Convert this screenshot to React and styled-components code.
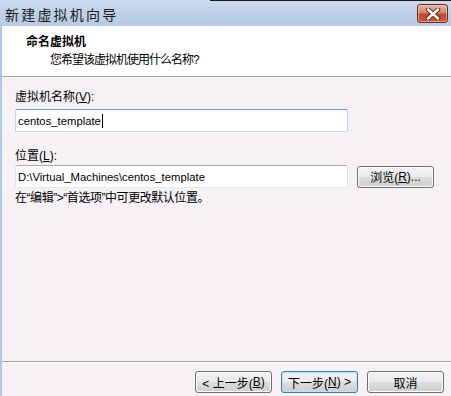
import React from 'react';
import styled, { createGlobalStyle } from 'styled-components';

const GlobalStyle = createGlobalStyle`
  html, body {
    margin: 0;
    padding: 0;
    background: #f5f1f5;
  }
  body {
    font-family: "Liberation Sans", "Noto Sans CJK SC", sans-serif;
    font-size: 12px;
    color: #000;
  }
`;

const Window = styled.div`
  width: 451px;
  height: 396px;
  display: flex;
  flex-direction: column;
  overflow: hidden;
`;

const TitleBar = styled.div`
  height: 26px;
  flex: none;
  display: flex;
  align-items: center;
  justify-content: space-between;
  padding: 0 3px 0 5px;
  background:
    linear-gradient(to right, transparent 210px, #1a1a1a 210px) top / 100% 1px no-repeat,
    linear-gradient(to bottom, #cbdaee 0%, #bfd1e8 50%, #b6cae3 100%);
`;

const TitleText = styled.div`
  font-family: "Noto Sans CJK SC", sans-serif;
  font-size: 14px;
  letter-spacing: 2.2px;
  color: #1b1b1b;
  padding-top: 1px;
`;

const CloseButton = styled.div`
  width: 29px;
  height: 17px;
  margin-top: 1px;
  border: 1px solid #6e2b22;
  border-radius: 3px;
  display: flex;
  align-items: center;
  justify-content: center;
  background: linear-gradient(to bottom, #eab0a2 0%, #da8270 45%, #c2452d 55%, #cc5c42 100%);
  box-shadow: inset 0 0 0 1px rgba(255, 220, 210, 0.5);
`;

const Content = styled.div`
  flex: 1;
  display: flex;
  flex-direction: column;
  border-left: 2px solid #abc9ee;
`;

const Header = styled.div`
  background: #fff;
  height: 51px;
  flex: none;
  padding: 8px 0 0 24px;
  box-sizing: border-box;
  border-bottom: 1px solid #a8a8a8;
`;

const HeaderTitle = styled.div`
  font-weight: bold;
  line-height: 16px;
`;

const HeaderSub = styled.div`
  line-height: 16px;
  padding: 2px 0 0 24px;
  letter-spacing: -1px;
`;

const Body = styled.div`
  flex: 1;
  padding: 12px 0 0 13px;
  display: flex;
  flex-direction: column;
`;

const Label = styled.div`
  line-height: 16px;
  margin-top: ${(p) => p.$top || 0}px;
  margin-bottom: ${(p) => p.$bottom || 0}px;
`;

const Key = styled.span`
  text-decoration: underline;
  text-underline-offset: 1px;
`;

const Row = styled.div`
  display: flex;
  align-items: center;
  gap: 9px;
`;

const TextBox = styled.div`
  width: 333px;
  height: 23px;
  box-sizing: border-box;
  display: flex;
  align-items: center;
  padding-left: 2px;
  font-size: 11.3px;
  background: #fff;
  border: 1px solid;
  border-radius: 2px;
  border-color: ${(p) =>
    p.$focused ? '#6b9ccb #b5d3eb #c3dff0 #b5d3eb' : '#abadb3 #dbdfe6 #e3e9ef #e2e3ea'};
`;

const Caret = styled.span`
  display: inline-block;
  width: 1px;
  height: 14px;
  background: #000;
  margin-left: 1px;
`;

const Hint = styled.div`
  line-height: 16px;
  margin-top: 2px;
  letter-spacing: -0.45px;
`;

const Footer = styled.div`
  flex: none;
  height: 35px;
  box-sizing: border-box;
  border-top: 1px solid #a0a0a0;
  box-shadow: inset 0 1px 0 #fff;
  display: flex;
  justify-content: flex-end;
  align-items: flex-start;
  gap: 9px;
  padding: 9px 7px 0 0;
`;

const Button = styled.div`
  width: ${(p) => p.$width || 77}px;
  height: 22px;
  box-sizing: border-box;
  border: 1px solid ${(p) => (p.$primary ? '#3c7fb1' : '#707070')};
  border-radius: 3px;
  display: flex;
  align-items: center;
  justify-content: center;
  background: linear-gradient(to bottom, #f2f2f2 0%, #ebebeb 48%, #dddddd 52%, #cfcfcf 100%);
  box-shadow: inset 0 0 0 1px ${(p) => (p.$primary ? '#b6e3f8' : '#fbfbfb')};
  color: #000;
  white-space: pre;
`;

const CloseIcon = () => (
  <svg width="16" height="12" viewBox="0 0 16 12">
    <path d="M3 1.5 L13 10.5 M13 1.5 L3 10.5" stroke="#5a1f18" strokeWidth="4.4" strokeLinecap="round" />
    <path d="M3 1.5 L13 10.5 M13 1.5 L3 10.5" stroke="#fff" strokeWidth="2.6" strokeLinecap="round" />
  </svg>
);

export default function App() {
  return (
    <Window>
      <GlobalStyle />
      <TitleBar>
        <TitleText>新建虚拟机向导</TitleText>
        <CloseButton>
          <CloseIcon />
        </CloseButton>
      </TitleBar>
      <Content>
        <Header>
          <HeaderTitle>命名虚拟机</HeaderTitle>
          <HeaderSub>您希望该虚拟机使用什么名称?</HeaderSub>
        </Header>
        <Body>
          <Label $bottom={4}>
            虚拟机名称(<Key>V</Key>):
          </Label>
          <TextBox $focused>
            centos_template
            <Caret />
          </TextBox>
          <Label $top={16} $bottom={1}>
            位置(<Key>L</Key>):
          </Label>
          <Row>
            <TextBox>D:\Virtual_Machines\centos_template</TextBox>
            <Button>
              浏览(<Key>R</Key>)...
            </Button>
          </Row>
          <Hint>在“编辑”&gt;“首选项”中可更改默认位置。</Hint>
        </Body>
        <Footer>
          <Button>
            {'< 上一步('}
            <Key>B</Key>)
          </Button>
          <Button $primary>
            下一步(<Key>N</Key>{') >'}
          </Button>
          <Button>取消</Button>
        </Footer>
      </Content>
    </Window>
  );
}
